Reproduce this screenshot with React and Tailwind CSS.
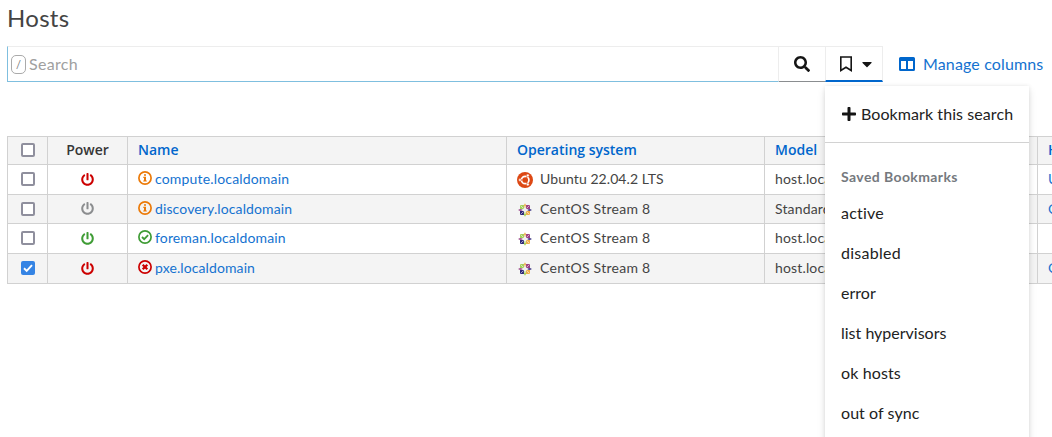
import React from "react";
import { FaPowerOff, FaSearch, FaCaretDown, FaPlus } from "react-icons/fa";

const RED = "text-[#cc0000]";
const rows = [
  { h: "h-[30px]", bg: "bg-white", power: RED, status: "info", name: "compute.localdomain", nameTrack: "tracking-[0.17px]", os: "Ubuntu 22.04.2 LTS", osTrack: "tracking-[0.07px]", ubuntu: true, model: "host.localdomain", last: "U" },
  { h: "h-[29px]", bg: "bg-[#f4f4f4]", power: "text-[#8b8d8f]", status: "info", name: "discovery.localdomain", nameTrack: "tracking-[0.12px]", os: "CentOS Stream 8", osTrack: "tracking-[0.27px]", model: "Standard PC", last: "C" },
  { h: "h-[30px]", bg: "bg-white", power: "text-[#3f9c35]", status: "ok", name: "foreman.localdomain", nameTrack: "tracking-[0.14px]", os: "CentOS Stream 8", osTrack: "tracking-[0.27px]", model: "host.localdomain", last: "" },
  { h: "h-[30px]", bg: "bg-[#f4f4f4]", power: RED, status: "error", name: "pxe.localdomain", nameTrack: "tracking-[0.1px]", os: "CentOS Stream 8", osTrack: "tracking-[0.27px]", checked: true, model: "host.localdomain", last: "C" },
];
const bookmarks = [
  { label: "active", track: "tracking-[0.2px]" },
  { label: "disabled", track: "tracking-[0.28px]" },
  { label: "error", track: "tracking-[0.02px]" },
  { label: "list hypervisors", track: "tracking-[0px]" },
  { label: "ok hosts", track: "tracking-[0.12px]" },
  { label: "out of sync", track: "tracking-[0.06px]" },
];

function Status({ kind }) {
  const color = kind === "info" ? "#ec7a08" : kind === "ok" ? "#3f9c35" : "#cc0000";
  return (
    <svg className="relative -top-px h-[14px] w-[14px] shrink-0" viewBox="0 0 14 14" fill="none">
      <circle cx="7" cy="7" r="6.1" stroke={color} strokeWidth="1.7" />
      {kind === "info" && <path d="M6 3.2h2v1.6H6zM5.3 5.8H8v3.6h.8v1.2H5.2V9.4H6V7h-.7z" fill={color} />}
      {kind === "ok" && <path d="M4 7l2.2 2.2L10.1 5.2" stroke={color} strokeWidth="1.8" />}
      {kind === "error" && <path d="M4.7 4.7l4.6 4.6M9.3 4.7L4.7 9.3" stroke={color} strokeWidth="2.2" />}
    </svg>
  );
}

function Ubuntu() {
  return (
    <svg className="relative top-px h-4 w-4 shrink-0" viewBox="0 0 16 16">
      <circle cx="8" cy="8" r="8" fill="#dd4814" />
      <circle cx="8.2" cy="8" r="3.7" fill="none" stroke="#fff" strokeWidth="1.7" />
      <path d="M8.2 8H2M8.2 8l3.2 5.5M8.2 8l3.2-5.5" stroke="#dd4814" strokeWidth=".7" />
      <circle cx="3" cy="8" r="1.4" fill="#fff" stroke="#dd4814" strokeWidth=".5" />
      <circle cx="10.8" cy="3.5" r="1.4" fill="#fff" stroke="#dd4814" strokeWidth=".5" />
      <circle cx="10.8" cy="12.5" r="1.4" fill="#fff" stroke="#dd4814" strokeWidth=".5" />
    </svg>
  );
}

function CentOS() {
  return (
    <svg className="relative top-px h-[14px] w-4 shrink-0" viewBox="0 0 16 14">
      <path d="M3 2h4v4H3z" fill="#a3cf5c" />
      <path d="M9 2h4v4H9z" fill="#9c3f85" />
      <path d="M3 8h4v4H3z" fill="#30297a" />
      <path d="M9 8h4v4H9z" fill="#f0ae4c" />
      <path d="M3.5 2.5l3 3M12.5 2.5l-3 3M3.5 11.5l3-3M12.5 11.5l-3-3" stroke="#fff" strokeWidth=".7" opacity=".8" />
      <path d="M6.9 2.1L8 .2l1.1 1.9v3H6.9z" fill="#efb660" />
      <path d="M6.9 11.9L8 13.8l1.1-1.9v-3H6.9z" fill="#a9d45a" />
      <path d="M2.8 6L1 7l1.8 1h3V6z" fill="#a65b98" />
      <path d="M13.2 6L15 7l-1.8 1h-3V6z" fill="#514a90" />
      <path d="M8 3.3v7.4M4.7 7h6.6" stroke="#eee" strokeWidth="1.3" />
    </svg>
  );
}

function Check({ checked }) {
  return checked ? (
    <svg className="mx-auto h-[14px] w-[14px]" viewBox="0 0 14 14">
      <rect width="14" height="14" rx="2" fill="#3584e4" />
      <path d="M3 7.3l2.7 2.6L11 4.2" fill="none" stroke="#fff" strokeWidth="1.9" />
    </svg>
  ) : (
    <span className="mx-auto block h-[14px] w-[14px] rounded-[2px] border-2 border-[#8f8f9d] bg-white" />
  );
}

const cell = "border-t border-l border-[#d1d1d1] p-0 pb-px";
const th = "border-t border-l border-[#d1d1d1] p-0 pb-[2px] font-['Open_Sans'] text-[14px] font-semibold leading-5";

export default function App() {
  return (
    <main className="relative h-[437px] w-[1052px] overflow-hidden bg-white pl-[7px] font-[Lato,sans-serif] text-[#444]">
      <h1 className="h-[46px] pt-[2px] text-[24px] leading-[32px] tracking-[0.3px]">Hosts</h1>
      <div className="flex h-9">
        <div className="flex w-[772px] items-center border border-t-[#ededed] border-r-[#ededed] border-b-[#7fbfdf] border-l-[#7fbfdf] pl-[3px]">
          <kbd className="flex h-[19px] w-[15px] items-center justify-center rounded-[5px] border border-[#aaa] pt-[3px] font-[Lato] text-[11px] text-[#777]">/</kbd>
          <span className="ml-[3px] text-[16px] tracking-[0.3px] text-[#a0a0a0]">Search</span>
        </div>
        <button className="flex w-[46px] items-center justify-center border-t border-t-[#ededed] border-b border-b-[#8a8d90] text-[#151515]">
          <FaSearch className="h-4 w-4" />
        </button>
        <button className="flex w-[58px] items-center gap-[9px] border border-[#ededed] border-b-2 border-b-[#0066cc] pl-[13px] text-[#151515]">
          <svg className="h-4 w-[14px]" viewBox="0 0 14 16">
            <path d="M1.8 1h10.4v13.5L7 11.3l-5.2 3.2z" fill="none" stroke="currentColor" strokeWidth="1.6" />
          </svg>
          <FaCaretDown className="h-4 w-[10px]" />
        </button>
        <button className="ml-4 flex items-center text-[#0066cc]">
          <svg className="h-[14px] w-4" viewBox="0 0 16 14">
            <path fillRule="evenodd" fill="currentColor" d="M1.5 0h13A1.5 1.5 0 0 1 16 1.5v11a1.5 1.5 0 0 1-1.5 1.5h-13A1.5 1.5 0 0 1 0 12.5v-11A1.5 1.5 0 0 1 1.5 0zM2 4v8h5V4zM9 4v8h5V4z" />
          </svg>
          <span className="ml-2 whitespace-nowrap text-[16px] tracking-[0.14px] text-[#1472d0]">Manage columns</span>
        </button>
      </div>

      <table className="mt-[54px] w-[1200px] table-fixed border-separate border-spacing-0 border-b border-[#d1d1d1] text-[14px] leading-5">
        <colgroup>
          <col className="w-[40px]" />
          <col className="w-[80px]" />
          <col className="w-[379px]" />
          <col className="w-[258px]" />
          <col className="w-[273px]" />
          <col />
        </colgroup>
        <thead>
          <tr className="h-7 bg-[#f4f4f4] text-left text-[#0066cc]">
            <th className={th}><Check /></th>
            <th className={th + " text-center text-[#363636]"}>Power</th>
            <th className={th + " pl-[10px]"}>Name</th>
            <th className={th + " pl-[10px]"}>Operating system</th>
            <th className={th + " pl-[10px]"}>Model</th>
            <th className={th + " pl-[10px]"}>Hostgroup</th>
          </tr>
        </thead>
        <tbody>
          {rows.map((r) => (
            <tr key={r.name} className={r.h + " " + r.bg}>
              <td className={cell}><Check checked={r.checked} /></td>
              <td className={cell + " pr-px"}><FaPowerOff className={"mx-auto h-[13px] w-[13px] " + r.power} /></td>
              <td className={cell}>
                <div className="flex items-center pl-[10px] text-[#1472d0]">
                  <Status kind={r.status} />
                  <span className={"ml-[3px] " + r.nameTrack}>{r.name}</span>
                </div>
              </td>
              <td className={cell}>
                <div className="flex items-center pl-[10px]">
                  {r.ubuntu ? <Ubuntu /> : <CentOS />}
                  <span className={"ml-[7px] " + r.osTrack}>{r.os}</span>
                </div>
              </td>
              <td className={cell + " pl-[10px] tracking-[0.15px]"}>{r.model}</td>
              <td className={cell + " pl-[10px] text-[#1472d0]"}>{r.last}</td>
            </tr>
          ))}
        </tbody>
      </table>

      <div className="absolute top-[86px] left-[825px] h-[380px] w-[204px] bg-white text-[16px] text-[#222] shadow-[0_4px_8px_rgba(3,3,3,0.12),0_0_4px_rgba(3,3,3,0.08)]">
        <div className="flex h-[57px] items-center border-b border-[#d2d2d2] pl-4">
          <FaPlus className="h-4 w-4 text-[#151515]" />
          <span className="ml-1 whitespace-nowrap tracking-[0.08px]">Bookmark this search</span>
        </div>
        <h2 className="mt-[23px] pl-4 text-[14px] font-bold leading-[21px] tracking-[0.4px] text-[#75797e]">Saved Bookmarks</h2>
        <ul className="mt-[6px]">
          {bookmarks.map((b) => (
            <li key={b.label} className={"flex h-10 items-center pl-4 " + b.track}>{b.label}</li>
          ))}
        </ul>
      </div>
    </main>
  );
}
